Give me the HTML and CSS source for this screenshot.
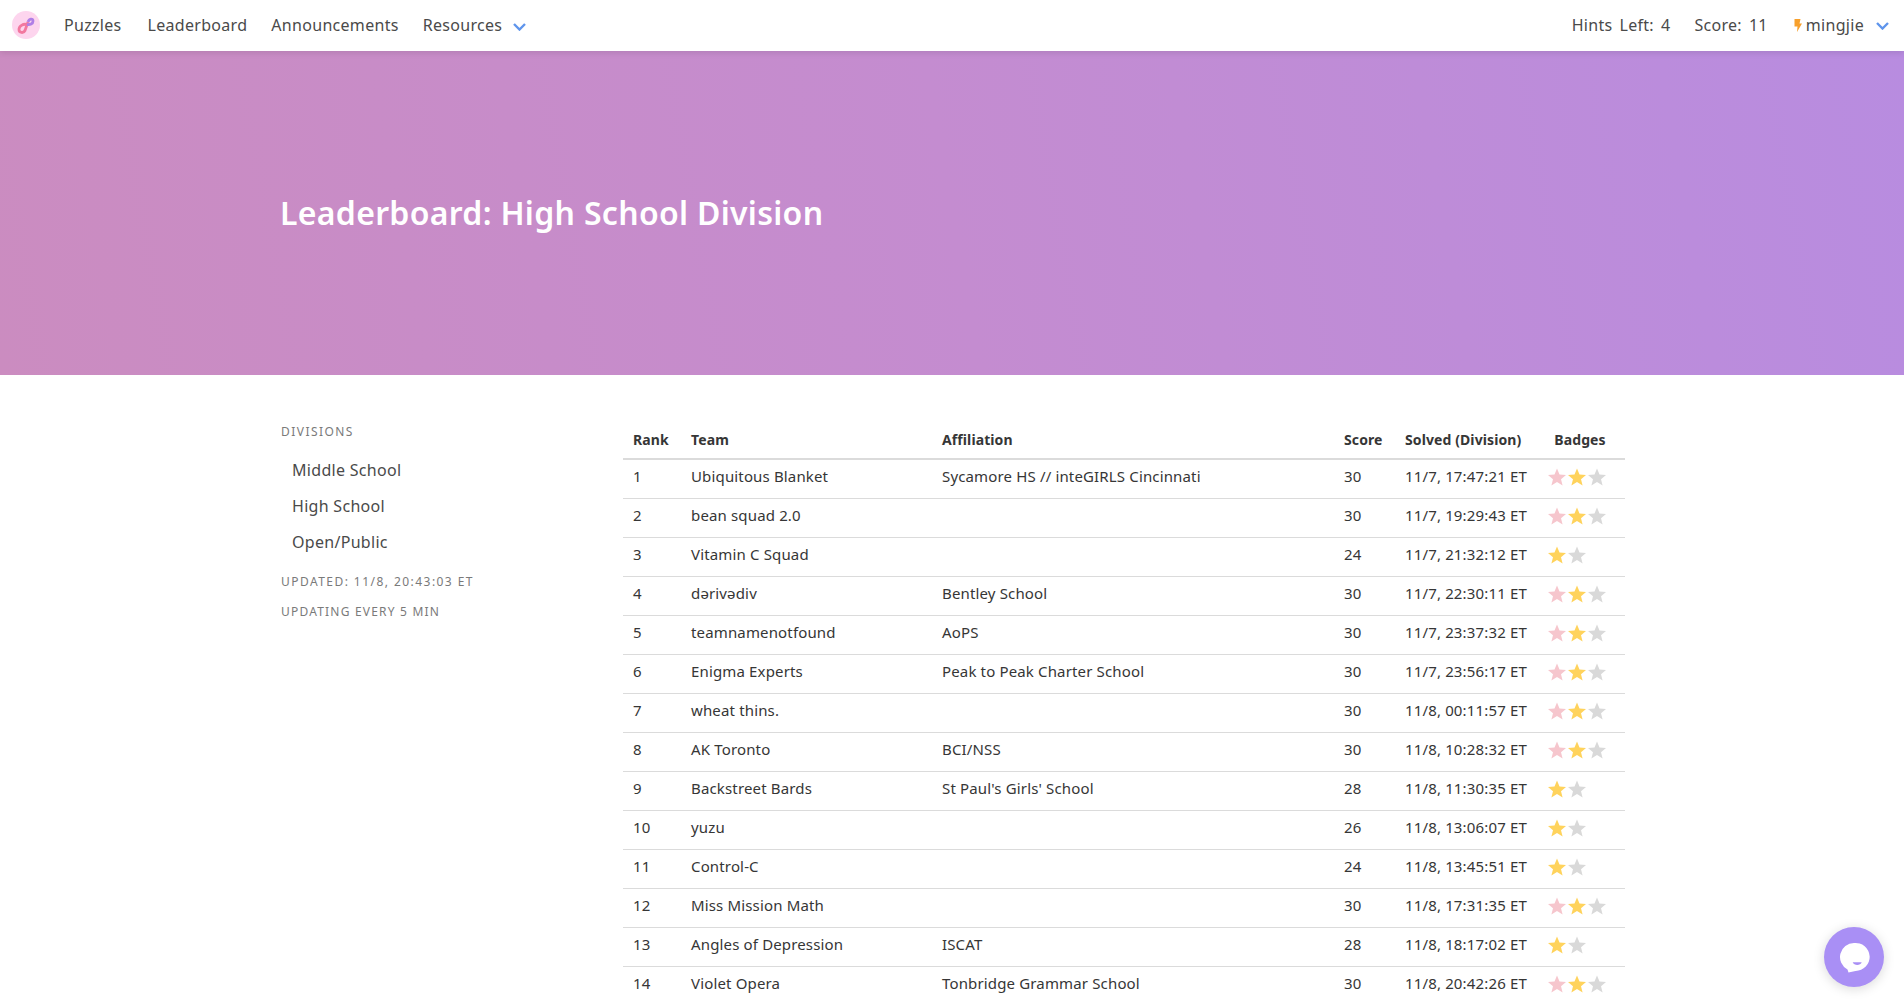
FILE: index.html
```html
<!DOCTYPE html>
<html lang="en">
<head>
    <meta charset="UTF-8">
    <meta name="viewport" content="width=device-width, initial-scale=1.0">
    <title>Leaderboard: High School Division</title>
    <link rel="stylesheet" href="styles.css">
</head>
<body>
    <nav class="navbar">
        <a class="logo" href="#">
            <svg viewBox="0 0 28 28" width="28" height="28">
                <path d="M15 13.500 C11 12.500 7 15 7 18.500 C7 22 11.500 22.500 13 19.500 L16 11" fill="none" stroke="#f2789f" stroke-width="2.800"/>
                <path d="M16 11 C17 7.500 21 7 21 10 C21 13 18 14 15 13.500" fill="none" stroke="#b07fe6" stroke-width="2.800"/>
            </svg>
        </a>
        <a class="nav-link" href="#">Puzzles</a>
        <a class="nav-link" href="#">Leaderboard</a>
        <a class="nav-link" href="#">Announcements</a>
        <a class="nav-link" href="#">Resources
            <svg class="chevron" viewBox="0 0 13 8" width="13" height="8"><path d="M1 1 L6.500 6.500 L12 1" fill="none" stroke="#5f95ec" stroke-width="2.400"/></svg>
        </a>
        <div class="nav-right">
            <span class="nav-link nav-stat">Hints Left: 4</span>
            <span class="nav-link nav-stat">Score: 11</span>
            <a class="nav-user" href="#">
                <svg class="bolt" viewBox="0 0 8 13" width="8" height="13"><path d="M0.500 0 H6.500 L5.500 4.500 H8 L3 13 L3.500 7.500 H0.500 Z" fill="#f7a02c"/></svg>
                mingjie
                <svg class="chevron" viewBox="0 0 13 8" width="13" height="8"><path d="M1 1 L6.500 6.500 L12 1" fill="none" stroke="#5f95ec" stroke-width="2.400"/></svg>
            </a>
        </div>
    </nav>

    <header class="hero">
        <h1>Leaderboard: High School Division</h1>
    </header>

    <main class="content">
        <aside class="sidebar">
            <p class="menu-label">Divisions</p>
            <ul class="menu-list">
                <li><a href="#">Middle School</a></li>
                <li><a href="#">High School</a></li>
                <li><a href="#">Open/Public</a></li>
            </ul>
            <p class="menu-label updated">Updated: 11/8, 20:43:03 ET</p>
            <p class="menu-label updating">Updating every 5 min</p>
        </aside>

        <table class="board">
            <thead>
                <tr>
                    <th class="col-rank">Rank</th>
                    <th class="col-team">Team</th>
                    <th class="col-aff">Affiliation</th>
                    <th class="col-score">Score</th>
                    <th class="col-solved">Solved (Division)</th>
                    <th class="col-badges">Badges</th>
                </tr>
            </thead>
            <tbody id="rows"></tbody>
        </table>
    </main>

    <a class="chat" href="#">
        <svg viewBox="0 0 32 32" width="32" height="32">
            <path d="M16 2 A14 14 0 1 1 17.500 29.900 L10.500 31.500 L9.500 28.400 A14 14 0 0 1 16 2 Z" fill="#fff"/>
            <path d="M14.700 21.300 H23.700 C22.500 25 16 25 14.700 21.300 Z" fill="#a98ff5"/>
        </svg>
    </a>

    <script src="script.js"></script>
</body>
</html>
```
FILE: styles.css
```css
* {
    box-sizing: border-box;
}

html, body {
    margin: 0;
    height: 1005px;
    overflow: hidden;
}

body {
    font-family: "Noto Sans", Arial, sans-serif;
    font-size: 16px;
    color: #4a4a4a;
    background-color: white;
}

a {
    color: inherit;
    text-decoration: none;
}

.navbar {
    position: relative;
    display: flex;
    align-items: center;
    height: 51px;
    padding-left: 12px;
    padding-bottom: 2px;
    letter-spacing: 0.3px;
    background-color: white;
    box-shadow: 0 2px 6px rgba(0, 0, 0, 0.1);
}

.logo {
    display: flex;
    width: 28px;
    height: 28px;
    margin-right: 12px;
    border-radius: 50%;
    background-color: #fdd5ee;
}

.nav-link {
    margin: 0 12px;
    white-space: nowrap;
}

.nav-link:nth-child(2) {
    margin-right: 14px;
}

.nav-stat {
    word-spacing: 2.5px;
}

.nav-right {
    display: flex;
    align-items: center;
    margin-left: auto;
}

.nav-user {
    display: flex;
    align-items: center;
    margin-left: 12px;
    padding-right: 15px;
    white-space: nowrap;
}

.bolt {
    margin-right: 4px;
    margin-top: 2px;
}

.chevron {
    margin-left: 6px;
    margin-top: 2px;
}

.nav-user .chevron {
    margin-left: 12px;
}

.hero {
    display: flex;
    align-items: center;
    height: 324px;
    padding-left: 280px;
    padding-bottom: 2px;
    background: linear-gradient(80deg, #cb8cc0 0%, #c48cd0 50%, #b88ce0 100%);
}

.hero h1 {
    margin: 0;
    font-size: 32px;
    font-weight: 600;
    letter-spacing: 0.3px;
    color: white;
}

.content {
    display: flex;
    align-items: flex-start;
    padding: 48px 0 0 280px;
}

.sidebar {
    width: 343px;
    flex-shrink: 0;
}

.menu-label {
    margin: 0;
    padding-left: 1px;
    font-size: 12px;
    letter-spacing: 1.45px;
    text-transform: uppercase;
    color: #7a7a7a;
}

.menu-list {
    list-style: none;
    margin: 12px 0 0;
    padding: 0;
}

.menu-list a {
    display: block;
    padding: 8px 12px;
    line-height: 20px;
    letter-spacing: 0.3px;
}

.updated {
    margin-top: 13px;
}

.updating {
    margin-top: 13px;
    letter-spacing: 1.2px;
}

.board {
    width: 1002px;
    border-collapse: collapse;
    table-layout: fixed;
    font-size: 15px;
    letter-spacing: 0.15px;
    color: #363636;
}

.board th {
    padding: 6px 10px 8px;
    height: 36px;
    text-align: left;
    font-size: 14px;
    font-weight: 700;
    letter-spacing: 0.1px;
    white-space: nowrap;
    border-bottom: 2px solid #dbdbdb;
}

.board td {
    height: 39px;
    padding: 0 10px 5px;
    white-space: nowrap;
    border-bottom: 1px solid #dbdbdb;
}

.board .col-badges {
    text-align: center;
}

.board td:last-child {
    padding: 0 0 3px 12px;
}

.col-rank { width: 58px; }
.col-team { width: 251px; }
.col-aff { width: 402px; }
.col-score { width: 61px; }
.col-solved { width: 140px; }
.col-badges { width: 90px; }

.stars {
    display: flex;
}

.star {
    width: 20px;
    height: 20px;
}

.chat {
    position: fixed;
    right: 20px;
    bottom: 18px;
    display: flex;
    align-items: center;
    justify-content: center;
    width: 60px;
    height: 60px;
    border-radius: 50%;
    background-color: #a98ff5;
    box-shadow: 0 2px 12px rgba(0, 0, 0, 0.15);
}
```
FILE: script.js
```js
const teams = [
    ["Ubiquitous Blanket", "Sycamore HS // inteGIRLS Cincinnati", 30, "11/7, 17:47:21 ET"],
    ["bean squad 2.0", "", 30, "11/7, 19:29:43 ET"],
    ["Vitamin C Squad", "", 24, "11/7, 21:32:12 ET"],
    ["dərivədiv", "Bentley School", 30, "11/7, 22:30:11 ET"],
    ["teamnamenotfound", "AoPS", 30, "11/7, 23:37:32 ET"],
    ["Enigma Experts", "Peak to Peak Charter School", 30, "11/7, 23:56:17 ET"],
    ["wheat thins.", "", 30, "11/8, 00:11:57 ET"],
    ["AK Toronto", "BCI/NSS", 30, "11/8, 10:28:32 ET"],
    ["Backstreet Bards", "St Paul's Girls' School", 28, "11/8, 11:30:35 ET"],
    ["yuzu", "", 26, "11/8, 13:06:07 ET"],
    ["Control-C", "", 24, "11/8, 13:45:51 ET"],
    ["Miss Mission Math", "", 30, "11/8, 17:31:35 ET"],
    ["Angles of Depression", "ISCAT", 28, "11/8, 18:17:02 ET"],
    ["Violet Opera", "Tonbridge Grammar School", 30, "11/8, 20:42:26 ET"]
];

const starPath = "M10 1.500 L12.500 7.500 L19 8 L14 12.200 L15.600 18.500 L10 15.100 L4.400 18.500 L6 12.200 L1 8 L7.500 7.500 Z";

function star(color) {
    return `<svg class="star" viewBox="0 0 20 20"><path d="${starPath}" fill="${color}"/></svg>`;
}

function badges(score) {
    // 30 point teams have the pink star too
    const colors = score === 30 ? ["#f6c6cd", "#ffd35c", "#d9d9d9"] : ["#ffd35c", "#d9d9d9"];
    return `<div class="stars">${colors.map(star).join("")}</div>`;
}

const rows = document.getElementById("rows");
teams.forEach((team, i) => {
    const row = rows.insertRow();
    row.insertCell(0).innerText = i + 1;
    row.insertCell(1).innerText = team[0];
    row.insertCell(2).innerText = team[1];
    row.insertCell(3).innerText = team[2];
    row.insertCell(4).innerText = team[3];
    row.insertCell(5).innerHTML = badges(team[2]);
});
```
